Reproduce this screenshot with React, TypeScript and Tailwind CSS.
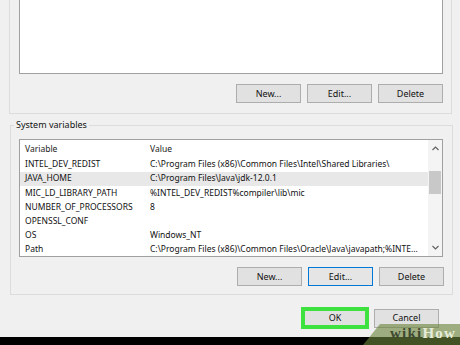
import React from "react";

const rows = [
  { name: "INTEL_DEV_REDIST", value: "C:\\Program Files (x86)\\Common Files\\Intel\\Shared Libraries\\" },
  { name: "JAVA_HOME", value: "C:\\Program Files\\Java\\jdk-12.0.1", selected: true },
  { name: "MIC_LD_LIBRARY_PATH", value: "%INTEL_DEV_REDIST%compiler\\lib\\mic" },
  { name: "NUMBER_OF_PROCESSORS", value: "8" },
  { name: "OPENSSL_CONF", value: "" },
  { name: "OS", value: "Windows_NT" },
  { name: "Path", value: "C:\\Program Files (x86)\\Common Files\\Oracle\\Java\\javapath;%INTE..." },
];

const Btn = ({ label, focused }: { label: string; focused?: boolean }) => (
  <div
    className={
      "w-[65px] h-[19px] flex items-center justify-center border text-[9px] text-[#111] " +
      (focused ? "border-[#0078d7] bg-[#e5e5e5]" : "border-[#adadad] bg-[#e1e1e1]")
    }
  >
    {label}
  </div>
);

const Chevron = ({ up }: { up?: boolean }) => (
  <svg width="7" height="5" viewBox="0 0 7 5">
    <path d={up ? "M0.5 4 L3.5 1 L6.5 4" : "M0.5 1 L3.5 4 L6.5 1"} fill="none" stroke="#606060" strokeWidth="1.1" />
  </svg>
);

export default function App() {
  return (
    <div
      className="relative w-[460px] h-[345px] overflow-hidden bg-[#f0f0f0] flex flex-col text-[#111]"
      style={{ fontFamily: '"Noto Sans", "Open Sans", sans-serif' }}
    >
      {/* user variables group (cut off at the top) */}
      <div className="mx-[9px] mr-[8px] h-[114px] border-x border-b border-[#dcdcdc] flex flex-col">
        <div className="ml-[9px] mr-[8px] h-[74px] bg-white border-x border-b border-[#a0a0a0]" />
        <div className="mt-[10px] pr-[8px] flex justify-end gap-[6px]">
          <Btn label="New..." />
          <Btn label="Edit..." />
          <Btn label="Delete" />
        </div>
      </div>

      {/* system variables */}
      <fieldset className="mt-[5px] ml-[10px] mr-[7px] border border-[#dcdcdc]">
        <legend className="ml-[3px] px-[2px] text-[9px] leading-[12px]">System variables</legend>
        <div className="mt-[8px] ml-[8px] mr-[9px] h-[118px] bg-white border border-[#a0a0a0] flex">
          <div className="flex-1 flex flex-col text-[8.5px]">
            <div className="h-[18px] flex items-center pl-[5px] text-[#222]">
              <span className="w-[125px]">Variable</span>
              <span>Value</span>
            </div>
            {rows.map((r) => (
              <div
                key={r.name}
                className={"h-[14.2px] flex items-center pl-[5px] whitespace-nowrap " + (r.selected ? "bg-[#e8e8e8]" : "")}
              >
                <span className="w-[125px] shrink-0">{r.name}</span>
                <span>{r.value}</span>
              </div>
            ))}
          </div>
          <div className="w-[14px] bg-[#f4f4f4] flex flex-col">
            <div className="h-[17px] flex items-center justify-center">
              <Chevron up />
            </div>
            <div className="h-[14px]" />
            <div className="h-[23px] mx-[1px] bg-[#c8c8c8]" />
            <div className="flex-1" />
            <div className="h-[17px] flex items-center justify-center">
              <Chevron />
            </div>
          </div>
        </div>
        <div className="mt-[10px] mb-[8px] pr-[8px] flex justify-end gap-[6px]">
          <Btn label="New..." />
          <Btn label="Edit..." focused />
          <Btn label="Delete" />
        </div>
      </fieldset>

      {/* OK / Cancel */}
      <div className="mt-[12px] pr-[21px] flex justify-end items-center gap-[5px]">
        <div className="w-[68px] h-[22px] border-[4px] border-[#3ee23e] bg-[#e1e1e1] flex items-center justify-center text-[9px]">
          OK
        </div>
        <Btn label="Cancel" />
      </div>

      <div className="mt-auto h-[8px] bg-black" />

      {/* watermark */}
      <div className="absolute right-0 bottom-0 w-[97px] h-[21px] bg-[rgba(108,132,58,0.62)] [clip-path:polygon(17px_0,100%_0,100%_100%,0_100%)] flex items-end justify-end pr-[4px] pb-[4px]">
        <span
          className="text-[15px] leading-none font-bold tracking-[1.2px]"
          style={{ fontFamily: '"Liberation Serif", serif' }}
        >
          <span className="text-[#3d4830]">wiki</span>
          <span className="text-[#e6ecd9]">How</span>
        </span>
      </div>
    </div>
  );
}
